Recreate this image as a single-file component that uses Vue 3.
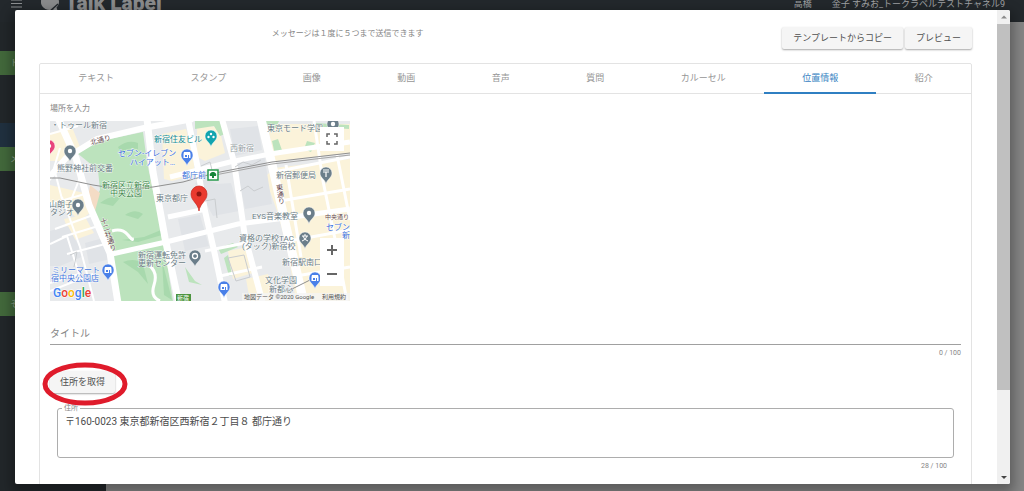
<script setup>
import { ref } from 'vue'

const tabs = ['テキスト', 'スタンプ', '画像', '動画', '音声', '質問', 'カルーセル', '位置情報', '紹介']
const active = ref('位置情報')
const title = ref('')
const address = ref('〒160-0023 東京都新宿区西新宿２丁目８ 都庁通り')

const labels = [
  { t: '・トゥール新宿', x: 1, y: 7, c: 'grey' },
  { t: '新宿住友ビル', x: 104, y: 21, c: 'teal' },
  { t: 'セブン-イレブン', x: 68, y: 35, c: 'blue' },
  { t: 'ハイアット…', x: 80, y: 44, c: 'blue' },
  { t: '熊野神社前交番', x: 7, y: 50, c: 'grey' },
  { t: '都庁前', x: 132, y: 57, c: 'blue' },
  { t: '新宿区立新宿', x: 52, y: 67, c: 'green' },
  { t: '中央公園', x: 60, y: 75, c: 'green' },
  { t: '東京都庁', x: 106, y: 80, c: 'grey' },
  { t: '山朗子', x: -1, y: 86, c: 'grey' },
  { t: 'タジオ', x: 0, y: 94, c: 'grey' },
  { t: '新宿運転免許', x: 88, y: 137, c: 'grey' },
  { t: '更新センター', x: 88, y: 145, c: 'grey' },
  { t: 'ミリーマート', x: 2, y: 152, c: 'blue' },
  { t: '宿中央公園店', x: 1, y: 160, c: 'blue' },
  { t: '東京モード学園', x: 217, y: 10, c: 'grey' },
  { t: '西新宿', x: 180, y: 30, c: 'pale' },
  { t: '新宿郵便局', x: 226, y: 57, c: 'grey' },
  { t: 'EYS音楽教室', x: 202, y: 98, c: 'grey' },
  { t: '資格の学校TAC', x: 189, y: 120, c: 'grey' },
  { t: '(タック)新宿校', x: 192, y: 128, c: 'grey' },
  { t: '新宿駅南口', x: 232, y: 144, c: 'grey' },
  { t: '文化学園', x: 215, y: 162, c: 'grey' },
  { t: '新都心', x: 219, y: 171, c: 'grey' },
  { t: 'セブン', x: 276, y: 109, c: 'blue' },
  { t: '新', x: 292, y: 117, c: 'blue' }
]

const pins = [
  { x: 20, y: 31, f: '#6b7e8a', k: 'dot' },
  { x: 161, y: 16, f: '#12a4af', k: 'dots' },
  { x: 137, y: 35, f: '#4a80e8', k: 'shop' },
  { x: 28, y: 85, f: '#6b7e8a', k: 'dot' },
  { x: 145, y: 136, f: '#6b7e8a', k: 'ring' },
  { x: 58, y: 150, f: '#4a80e8', k: 'shop' },
  { x: 276, y: 53, f: '#6b7e8a', k: 'post' },
  { x: 259, y: 93, f: '#6b7e8a', k: 'dot' },
  { x: 255, y: 118, f: '#6b7e8a', k: 'school' },
  { x: 174, y: 167, f: '#4a80e8', k: 'shop' },
  { x: 265, y: 158, f: '#4a80e8', k: 'shop' },
  { x: 283, y: 4, f: '#6b7e8a', k: 'dot' },
  { x: -1, y: 26, f: '#e8457c', k: 'dot' }
]
</script>

<template>
  <div class="shell">
    <header class="top">
      <button class="menu" aria-label="メニュー">
        <svg width="11" height="9" viewBox="0 0 11 9"><path d="M0 1h11M0 4.500h11M0 8h11" stroke="#8d9092" stroke-width="1.200" /></svg>
      </button>
      <svg class="logo" width="18" height="18" viewBox="0 0 18 18">
        <path d="M9 0a9 8 0 0 1 9 8c0 2-1 4-2.500 5.500L17 18l-5-2.500A9 8 0 1 1 9 0z" fill="#8a8b8c" />
        <path d="M8 18l9-8" stroke="#23282c" stroke-width="1.500" />
      </svg>
      <span class="brand">Talk Label</span>
      <span class="user">高橋</span>
      <span class="channel">金子 すみお_トークラベルテストチャネル9</span>
    </header>
    <div class="body">
      <nav class="side">
        <a href="#" class="item first">ト</a>
        <a href="#" class="item current" aria-label="選択中"></a>
        <a href="#" class="item">メ</a>
        <a href="#" class="item last">そ</a>
      </nav>
      <main class="page"></main>
    </div>
  </div>

  <div class="modal" role="dialog">
    <div class="content">
      <div class="head">
        <p class="notice">メッセージは１度に５つまで送信できます</p>
        <div class="actions">
          <button class="btn wide">テンプレートからコピー</button>
          <button class="btn wide">プレビュー</button>
        </div>
      </div>
      <section class="panel">
        <div class="tabs" role="tablist">
          <button
            v-for="t in tabs"
            :key="t"
            role="tab"
            :aria-selected="t === active"
            :class="['tab', { on: t === active }]"
            @click="active = t"
          >{{ t }}</button>
        </div>
        <div class="form">
          <p class="place">場所を入力</p>
          <div class="map">
            <svg class="tiles" width="300" height="180" viewBox="0 0 300 180">
              <rect width="300" height="180" fill="#e8eaec" />
              <g fill="#fbf3da">
                <path d="M0 12l22-6 8 20-12 14H0zM0 64l34 8 8 18-12 10L8 80 0 82zM14 98l20-4 10 18-22 8z" />
                <path d="M112 13l24-5 8 26v20l-22 6-8-2zM147 4l22 2 6 26-20 8-8-4z" />
                <path d="M217 3h83v29l-75 8zM215 56l12 34 10 36 9 54h54V38l-76 9zM178 130l20-4 5 26-20 6z" />
                <path d="M196 158l22-5 6 27h-24z" />
              </g>
              <g fill="#e0e3e7">
                <path d="M145 62l10-4 12 5 14-1 8 28-26 5zM185 40l29-7 8 50-27 5zM128 98l22-4 9 31-24 5z" />
                <path d="M0 110l18-5 16 30-24 10H0zM35 122l22-6 4 22-22 5zM180 8l28-3 4 24-27 6z" />
              </g>
              <g fill="#bce3bd">
                <path d="M27 32L50 20l43-9 4 30 6 29 10 47 10 63H68l-6-46-17-43-5-5 10-17-2-20-16-13z" />
                <path d="M145 0h26l4 13-5 2-6-10-19 3zM213 0h16l-3 7-12-2zM222 20l6-2 5 14-8 2zM257 20l8 2-4 9-7-3z" />
                <path d="M168 127l15-5 5 4-17 7zM178 134l4 20-3 1-5-18zM135 146l10 14 7 4-13-3zM264 2l35 2v4l-30-2z" />
              </g>
              <g fill="#a8d9ad">
                <path d="M68 26q10-8 20-4v6q-12-2-17 4zM50 82q12-9 20-5l-7 8zM72 119l22-3 17-7 1 5-24 7zM75 94q10-7 18-1l-5 5z" />
                <path d="M73 141q12-5 20 2l5 20-10-12zM112 139l10 40-8-5z" />
              </g>
              <path d="M40 64l10 8-5 18-8-6z" fill="#f4dcc5" />
              <g fill="none" stroke="#fff">
                <path d="M-4 60L16 37 47 18 94 7l49-9" stroke-width="6" />
                <path d="M8-3l18 40 13 47 21 48 8 50M97-2l6 53 12 66 14 66" stroke-width="7" />
                <path d="M138-2l9 45 8 47 10 44 10 48M172-2l12 43 11 75 18 67" stroke-width="6" />
                <path d="M211-2l13 54 13 58 17 72" stroke-width="9" />
                <path d="M62 133l54-12 72-18 48-6 64-9M120 56l60-15 40-8 80-12M118 96l38-8" stroke-width="5" />
                <path d="M224 51l76-15M230 80l70-12M239 120l61-11M246 155l54-9M264 0l9 60 12 58 12 62M236 44l15 92M287 34l13 65" stroke-width="3" />
                <path d="M0 13l28-8M0 83l35-10M5 108l38-14M12 116l33-10M17 133l42-11M12 76l18 50 14 54M0 123l17-8 12 38-29 9M0 170l43-17M10 27l-6 20 8 31M33 49l-12 30" stroke-width="2" />
                <path d="M62 110q10-3 16 4t4 3M100 145q8 7 4 19t6 16" stroke-width="3" />
                <path d="M155 130l40-8M170 155l42-9" stroke-width="3" />
              </g>
              <g fill="none" stroke="#c9cccf" stroke-width="1">
                <path d="M185 46l8-5 9 3 9-5M190 70l8-5 6 5 9-4M151 45l9-4 3 12M178 137l16-3 6 22-14 4zM20 134l7-3-3 15M155 80l10-2 2 19" />
              </g>
              <path d="M0 57h10l33 7q30 6 60 2l30-5 32-9 57-11 78-9M238 170l22-11" fill="none" stroke="#8f8f8f" />
              <path d="M165 54l57-11 78-9" fill="none" stroke="#a5a5a5" />
              <g class="names">
                <text v-for="l in labels" :key="l.t + l.y" :x="l.x" :y="l.y" :class="l.c">{{ l.t }}</text>
                <text class="road" transform="translate(41 24) rotate(-14)">北通り</text>
                <text class="road vertical" transform="translate(52 97) rotate(-18)">十二社通り</text>
                <text class="road vertical" transform="translate(228 63) rotate(-8)">東通り</text>
                <text class="road dark" x="275" y="98">中央通り</text>
              </g>
              <g v-for="(p, i) in pins" :key="i" :transform="`translate(${p.x} ${p.y})`">
                <path d="M0 10C-1 5-6 4-6-1a6 6 0 1 1 12 0c0 5-5 6-6 11z" :fill="p.f" stroke="#fff" stroke-width=".5" />
                <circle v-if="p.k === 'dot'" cy="-1" r="2.200" fill="#fff" />
                <circle v-else-if="p.k === 'ring'" cy="-1" r="2.500" fill="none" stroke="#fff" stroke-width="1.300" />
                <path v-else-if="p.k === 'shop'" d="M-3-4h6l.5 2v4h-7v-4zM-2-1v2h2v-2zM1-1v3h1v-3z" fill="#fff" fill-rule="evenodd" />
                <path v-else-if="p.k === 'post'" d="M-3-4h6M-3-2h6M0-2v5" stroke="#fff" stroke-width="1.200" />
                <path v-else-if="p.k === 'school'" d="M0-5v2M-3-3h6M-2-3q1 4 5 5M2-3q-1 4-5 5" fill="none" stroke="#fff" />
                <g v-else fill="#fff"><circle cy="-3" r="1.200" /><circle cx="-2.500" cy="0" r="1.200" /><circle cx="2.500" cy="0" r="1.200" /></g>
              </g>
              <g transform="translate(158 49)">
                <rect width="10" height="10" fill="#fff" stroke="#279b4c" stroke-width="1.500" />
                <path d="M5 2c2 0 4 2 3 4H6v2H4V6H2c-1-2 1-4 3-4z" fill="#16853a" />
              </g>
              <path d="M149 90c-1-8-8-10-8-17a8 8 0 1 1 16 0c0 7-7 9-8 17z" fill="#ea3a2f" stroke="#c5281f" stroke-width=".7" />
              <circle cx="149" cy="73" r="2.500" fill="#8e1712" />
              <rect x="126" y="173" width="15" height="7" fill="#4b9440" />
              <text class="sign" x="127" y="179">新宿</text>
              <rect x="192" y="172" width="108" height="8" fill="#f4f4f4" opacity=".75" />
              <text class="credit" x="194" y="178">地図データ ©2020 Google</text>
              <text class="credit" x="272" y="178">利用規約</text>
              <text class="google" x="3" y="176"><tspan fill="#4285f4">G</tspan><tspan fill="#ea4335">o</tspan><tspan fill="#fbbc05">o</tspan><tspan fill="#4285f4">g</tspan><tspan fill="#34a853">l</tspan><tspan fill="#ea4335">e</tspan></text>
            </svg>
            <div class="controls">
              <button class="ctl" aria-label="全画面">
                <svg width="12" height="12" viewBox="0 0 12 12"><path d="M1 4V1h3M8 1h3v3M11 8v3H8M4 11H1V8" fill="none" stroke="#666" stroke-width="1.500" /></svg>
              </button>
              <div class="zoom">
                <button class="ctl" aria-label="拡大">
                  <svg width="12" height="12" viewBox="0 0 12 12"><path d="M6 1v10M1 6h10" stroke="#666" stroke-width="2" /></svg>
                </button>
                <button class="ctl" aria-label="縮小">
                  <svg width="12" height="12" viewBox="0 0 12 12"><path d="M1 6h10" stroke="#666" stroke-width="2" /></svg>
                </button>
              </div>
            </div>
          </div>

          <div class="line-field">
            <label v-show="!title" for="title">タイトル</label>
            <input id="title" v-model="title" maxlength="100" />
          </div>
          <div class="count">{{ title.length }} / 100</div>

          <div class="fetch">
            <button class="btn">住所を取得</button>
            <svg class="mark" width="86" height="44" viewBox="0 0 86 44"><ellipse cx="43" cy="22" rx="40" ry="19" fill="none" stroke="#df1b2b" stroke-width="5" /></svg>
          </div>

          <div class="address">
            <div class="box">
              <label for="address">住所</label>
              <textarea id="address" v-model="address" maxlength="100"></textarea>
            </div>
            <div class="count inner">{{ address.length }} / 100</div>
          </div>
        </div>
      </section>
    </div>
    <div class="scroll" aria-hidden="true">
      <svg width="13" height="14" viewBox="0 0 13 14"><path d="M4 8.500h6L7 5.500z" fill="#8a8a8a" /></svg>
      <div class="track"><div class="thumb"></div></div>
      <svg width="13" height="14" viewBox="0 0 13 14"><path d="M4 6h6L7 9z" fill="#444" /></svg>
    </div>
  </div>
</template>

<style>
html, body, #app { height: 100%; }
body { margin: 0; overflow: hidden; }
</style>

<style scoped>
.shell, .modal { font-family: Roboto, "Noto Sans CJK JP", sans-serif; }
.shell *, .modal, .modal * { box-sizing: border-box; }
button { font: inherit; color: inherit; border: 0; padding: 0; margin: 0; background: none; cursor: pointer; }
p { margin: 0; }

.shell { height: 100%; display: flex; flex-direction: column; overflow: hidden; background: #858585; }
.top { flex: none; height: 38px; margin-top: -16px; padding: 0 19px 0 11px; display: flex; align-items: center; background: #23282c; color: #a0a2a4; font-size: 9px; }
.menu { display: flex; margin-right: 19px; }
.brand { margin-left: 6px; font-size: 21px; font-weight: 900; color: #8a8b8c; }
.user { margin-left: auto; margin-right: 20px; }
.channel { margin-right: 0; }
.body { flex: 1; display: flex; min-height: 0; }
.side { width: 106px; display: flex; flex-direction: column; background: #22272a; }
.item { height: 24px; padding-left: 10px; line-height: 24px; font-size: 9px; color: #8fa388; background: #42683b; text-decoration: none; }
.first { margin-top: 29px; }
.current { margin-top: 48px; background: #20303f; }
.last { margin-top: 121px; }
.page { flex: 1; background: #858585; }

.modal { position: absolute; inset: 10px 14px 7px 15px; display: flex; overflow: hidden; background: #fff; border-radius: 2px; box-shadow: 0 5px 12px 4px rgba(0, 0, 0, .3); }
.content { flex: 1; min-width: 0; padding: 17px 25px 0 24px; overflow: hidden; }
.head { display: flex; align-items: flex-start; justify-content: space-between; height: 36px; }
.notice { flex: 1; padding-right: 126px; font-size: 8px; line-height: 14px; text-align: center; color: #858585; }
.actions { display: flex; gap: 2px; }
.btn { height: 22px; padding: 0 10px; border-radius: 2px; font-size: 9px; line-height: 22px; color: #505050; background: #f5f5f5; box-shadow: 0 1px 2px rgba(0, 0, 0, .35); white-space: nowrap; }
.wide { padding: 0 11px; }

.panel { min-height: 440px; border: 1px solid #e3e3e3; border-radius: 2px; }
.tabs { display: flex; height: 30px; border-bottom: 1px solid #e3e3e3; }
.tab { flex: 1 1 auto; height: 30px; font-size: 9px; line-height: 28px; color: #969696; border-bottom: 2px solid transparent; }
.tab.on { color: #3682c2; border-color: #2f7fc2; }
.form { padding: 8px 10px 0; }
.place { font-size: 8px; line-height: 14px; color: #858585; }

.map { position: relative; width: 300px; height: 180px; margin-top: 5px; overflow: hidden; }
.tiles { display: block; }
.names { font-size: 8px; paint-order: stroke; stroke: rgba(255, 255, 255, .8); stroke-width: 1px; }
.names text { paint-order: stroke; }
.grey { fill: #6b7c85; }
.pale { fill: #969fa4; }
.teal { fill: #108a93; }
.blue { fill: #3d72dc; }
.green { fill: #388346; }
.road { font-size: 7px; fill: #674b4f; }
.dark { font-size: 6px; }
.vertical { writing-mode: vertical-rl; }
.sign { font-size: 6px; fill: #fff; }
.credit { font-size: 6px; fill: #555; }
.google { font-size: 12px; font-weight: 500; paint-order: stroke; stroke: #fff; stroke-width: 1px; }
.controls { position: absolute; top: 6px; right: 6px; bottom: 15px; display: flex; flex-direction: column; justify-content: space-between; }
.ctl { width: 24px; height: 24px; display: flex; align-items: center; justify-content: center; background: #fff; }
.zoom { background: #fff; }

.line-field { display: grid; align-items: center; margin-top: 23px; border-bottom: 1px solid #a0a0a0; }
.line-field label, .line-field input { grid-area: 1 / 1; font-size: 10px; line-height: 20px; color: #858585; }
.line-field input { width: 100%; height: 20px; padding: 0; border: 0; outline: 0; background: none; font-family: inherit; }
.count { margin-top: 2px; font-size: 7px; line-height: 12px; text-align: right; color: #858585; }
.fetch { position: relative; z-index: 1; display: flex; margin-top: 12px; }
.mark { position: absolute; left: -8px; top: -9px; pointer-events: none; }
.address { padding: 15px 7px 0; }
.box { position: relative; display: flex; border: 1px solid #adadad; border-radius: 3px; }
.box label { position: absolute; left: 4px; top: -7px; padding: 0 2px; font-size: 7px; line-height: 12px; color: #858585; background: #fff; }
.box textarea { flex: 1; height: 48px; padding: 5px 7px; border: 0; outline: 0; resize: none; overflow: hidden; background: none; font-family: inherit; font-size: 10px; line-height: 16px; color: #4c4c4c; }
.inner { padding-right: 7px; }

.scroll { flex: none; width: 13px; display: flex; flex-direction: column; background: #f0f0f0; }
.scroll svg { display: block; }
.track { flex: 1; }
.thumb { height: 82%; background: #c0c0c0; }
</style>
